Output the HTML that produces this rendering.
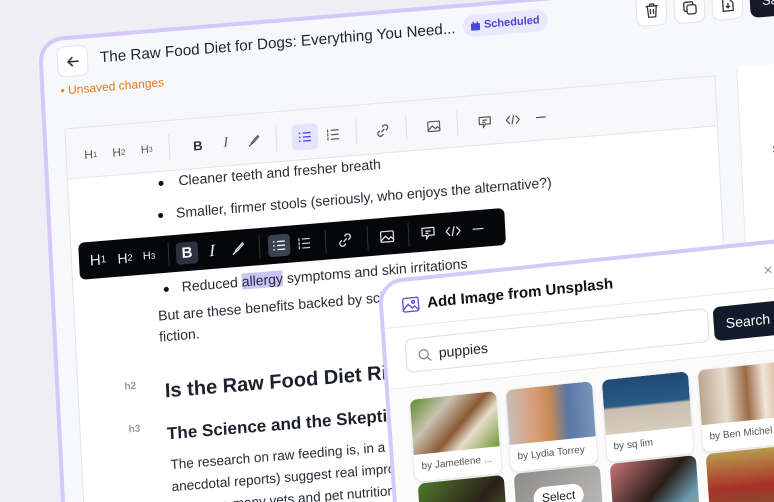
<!DOCTYPE html>
<html style="width:774px;height:502px;overflow:hidden"><head><meta charset="utf-8"><style>
*{box-sizing:border-box;margin:0;padding:0}
html,body{width:774px;height:502px;overflow:hidden}
body{background:#efeef4;font-family:"Liberation Sans",sans-serif;position:relative}
.w{position:absolute;transform-origin:0 0}
.abs{position:absolute}
.ic{position:absolute;transform:translate(-50%,-50%);display:flex;align-items:center;justify-content:center}
.t{position:absolute;white-space:nowrap;color:#262b36}
svg{display:block}
</style></head><body>

<div class="w" style="left:42px;top:42px;transform:matrix(1,-0.082,0.05,1,0,0)">
  <div class="abs" style="left:-4px;top:-4px;width:900px;height:700px;border:4px solid #d3c9fb;border-radius:24px;background:#f7f8fb"></div>
  <div class="abs" style="left:14px;top:6px;width:31px;height:31px;border:1px solid #e2e3ea;border-radius:8px;background:#fff;display:flex;align-items:center;justify-content:center">
    <svg width="16" height="16" viewBox="0 0 16 16" fill="none" stroke="#333" stroke-width="1.6" stroke-linecap="round"><path d="M13 8H3M7 4L3 8l4 4"/></svg>
  </div>
  <div class="t" style="left:57px;top:12px;font-size:15.2px;color:#1f2430">The Raw Food Diet for Dogs: Everything You Need...</div>
  <div class="abs" style="left:420px;top:8px;height:22px;padding:0 8px;border-radius:11px;background:#e9e8fd;color:#4b45d6;font-size:11px;font-weight:bold;display:flex;align-items:center;gap:4px">
    <svg width="9" height="9" viewBox="0 0 10 10"><rect x="0" y="2" width="10" height="8" rx="1" fill="#4b45d6"/><rect x="2" y="0" width="1.5" height="3" fill="#4b45d6"/><rect x="6.5" y="0" width="1.5" height="3" fill="#4b45d6"/></svg>Scheduled</div>
  <div class="t" style="left:16px;top:43px;font-size:12px;color:#e87a10">• Unsaved changes</div>
  <div class="abs" style="left:593px;top:3px;width:31px;height:31px;border:1px solid #e2e3ea;border-radius:8px;background:#fff;display:flex;align-items:center;justify-content:center"><svg width="14" height="15" viewBox="0 0 14 15" fill="none" stroke="#333" stroke-width="1.3"><path d="M1 3h12M5 3V1h4v2M2.5 3l1 11h7l1-11M5.5 6v5M8.5 6v5"/></svg></div>
  <div class="abs" style="left:631px;top:3px;width:31px;height:31px;border:1px solid #e2e3ea;border-radius:8px;background:#fff;display:flex;align-items:center;justify-content:center"><svg width="14" height="14" viewBox="0 0 14 14" fill="none" stroke="#333" stroke-width="1.3"><rect x="4" y="4" width="9" height="9" rx="2"/><path d="M10 4V2.5A1.5 1.5 0 008.5 1h-6A1.5 1.5 0 001 2.5v6A1.5 1.5 0 002.5 10H4"/></svg></div>
  <div class="abs" style="left:669px;top:3px;width:31px;height:31px;border:1px solid #e2e3ea;border-radius:8px;background:#fff;display:flex;align-items:center;justify-content:center"><svg width="12" height="14" viewBox="0 0 12 14" fill="none" stroke="#333" stroke-width="1.3"><path d="M1 1h6l4 4v8H1zM6 5v5M4 8l2 2 2-2"/></svg></div>
  <div class="abs" style="left:707px;top:3px;width:60px;height:31px;border-radius:8px;background:#141a28;color:#fff;font-size:13px;padding:7px 12px">Save</div>
  <div class="abs" style="left:690px;top:82px;width:120px;height:600px;background:#fff;border-left:1px solid #e6e7ec"></div>
  <div class="t" style="left:722px;top:162px;font-size:10px;color:#666">S</div>
  <div class="abs" style="left:18px;top:88px;width:651px;height:600px;border:1px solid #e3e4ea;background:#fff;overflow:hidden">
    <div class="t" style="left:110px;top:52px;font-size:14px">Cleaner teeth and fresher breath</div>
    <div class="abs" style="left:90px;top:59px;width:5px;height:5px;border-radius:50%;background:#111"></div>
    <div class="t" style="left:106px;top:84px;font-size:14px">Smaller, firmer stools (seriously, who enjoys the alternative?)</div>
    <div class="abs" style="left:88px;top:91px;width:5px;height:5px;border-radius:50%;background:#111"></div>
    <div class="t" style="left:108px;top:158px;font-size:14px">Reduced <span style="background:#cac3f6">allergy</span> symptoms and skin irritations</div>
    <div class="abs" style="left:90px;top:165px;width:5px;height:5px;border-radius:50%;background:#111"></div>
    <div class="t" style="left:83px;top:183px;font-size:14px;line-height:21px">But are these benefits backed by science, or is it fiction<br>fiction.</div>
    <div class="t" style="left:46px;top:256px;font-size:10px;color:#999;font-weight:bold">h2</div>
    <div class="t" style="left:86px;top:258px;font-size:20px;font-weight:bold;color:#1b202b">Is the Raw Food Diet Right for Your Dog?</div>
    <div class="t" style="left:48px;top:299px;font-size:10px;color:#999;font-weight:bold">h3</div>
    <div class="t" style="left:86px;top:302px;font-size:17px;font-weight:bold;color:#1b202b">The Science and the Skepticism</div>
    <div class="t" style="left:88px;top:332px;font-size:13.5px;line-height:22px">The research on raw feeding is, in a word, mixed. Some studies (and<br>anecdotal reports) suggest real improvements in coat and digestion.<br>However, many vets and pet nutritionists remain cautious.</div>
    <div class="abs" style="left:0;top:0;width:651px;height:50px;background:#f8f8fa;border-bottom:1px solid #e3e4ea;color:#555;font-size:12px">
      <span class="ic" style="left:24px;top:27px">H<small style="font-size:8px">1</small></span>
      <span class="ic" style="left:52px;top:27px">H<small style="font-size:8px">2</small></span>
      <span class="ic" style="left:80px;top:27px;font-size:11px">H<small style="font-size:7px">3</small></span>
      <span class="abs" style="left:102px;top:13px;width:1px;height:26px;background:#e0e0e6"></span>
      <span class="ic" style="left:131px;top:27px;font-weight:bold;font-size:13px;color:#333">B</span>
      <span class="ic" style="left:159px;top:27px;font-style:italic;font-family:'Liberation Serif',serif;font-size:14px">I</span>
      <span class="ic" style="left:187px;top:27px"><svg width="12" height="12" viewBox="0 0 12 12" fill="none" stroke="#555" stroke-width="1.2"><path d="M10 1l1 1-6 6-2 1 1-2zM3 9l-2 2"/></svg></span>
      <span class="abs" style="left:209px;top:13px;width:1px;height:26px;background:#e0e0e6"></span>
      <span class="abs" style="left:225px;top:14px;width:26px;height:26px;border-radius:5px;background:#e3e4fd"></span>
      <span class="ic" style="left:238px;top:27px"><svg width="12" height="10" viewBox="0 0 12 10" stroke="#4b45d6" stroke-width="1.3"><path d="M4 1h8M4 5h8M4 9h8M0 1h1.5M0 5h1.5M0 9h1.5"/></svg></span>
      <span class="ic" style="left:266px;top:27px"><svg width="12" height="11" viewBox="0 0 12 11" stroke="#555" stroke-width="1.2"><path d="M4 1h8M4 5.5h8M4 10h8M1 0v3M1 4v3M1 8v3"/></svg></span>
      <span class="abs" style="left:289px;top:13px;width:1px;height:26px;background:#e0e0e6"></span>
      <span class="ic" style="left:316px;top:27px"><svg width="13" height="13" viewBox="0 0 13 13" fill="none" stroke="#555" stroke-width="1.3"><path d="M5 8l3-3M6 3l1.5-1.5a2.5 2.5 0 013.5 3.5L9.5 6.5M7 10l-1.5 1.5A2.5 2.5 0 012 8l1.5-1.5"/></svg></span>
      <span class="abs" style="left:339px;top:13px;width:1px;height:26px;background:#e0e0e6"></span>
      <span class="ic" style="left:367px;top:27px"><svg width="13" height="11" viewBox="0 0 13 11" fill="none" stroke="#555" stroke-width="1.2"><rect x=".6" y=".6" width="11.8" height="9.8" rx="1"/><path d="M1 9l4-4 3 3 2-2 3 3"/></svg></span>
      <span class="abs" style="left:390px;top:13px;width:1px;height:26px;background:#e0e0e6"></span>
      <span class="ic" style="left:418px;top:27px"><svg width="13" height="12" viewBox="0 0 13 12" fill="none" stroke="#555" stroke-width="1.2"><path d="M1 1h11v7H7l-2 3V8H1zM4 4h5M4 6h3"/></svg></span>
      <span class="ic" style="left:446px;top:27px"><svg width="14" height="10" viewBox="0 0 14 10" fill="none" stroke="#555" stroke-width="1.2"><path d="M4 1L0.5 5 4 9M10 1l3.5 4L10 9M8 0.5L6 9.5"/></svg></span>
      <span class="ic" style="left:474px;top:27px"><svg width="10" height="2"><rect width="10" height="1.3" fill="#555"/></svg></span>
    </div>
  </div>
  <div class="abs" style="left:26px;top:203px;width:426px;height:37px;border-radius:6px;background:#06070a;color:#eee;font-size:15px">
    <span class="ic" style="left:19px;top:19px">H<small style="font-size:10px">1</small></span>
    <span class="ic" style="left:46px;top:19px;font-size:14px">H<small style="font-size:9px">2</small></span>
    <span class="ic" style="left:70px;top:19px;font-size:11px">H<small style="font-size:8px">3</small></span>
    <span class="abs" style="left:89px;top:7px;width:1px;height:24px;background:#333"></span>
    <span class="abs" style="left:97px;top:8px;width:22px;height:22px;border-radius:4px;background:#2b3240"></span>
    <span class="ic" style="left:108px;top:19px;font-weight:bold;font-size:15px;color:#fff">B</span>
    <span class="ic" style="left:133px;top:19px;font-style:italic;font-family:'Liberation Serif',serif;font-size:17px">I</span>
    <span class="ic" style="left:159px;top:19px"><svg width="13" height="13" viewBox="0 0 12 12" fill="none" stroke="#ddd" stroke-width="1.2"><path d="M10 1l1 1-6 6-2 1 1-2zM3 9l-2 2"/></svg></span>
    <span class="abs" style="left:180px;top:7px;width:1px;height:24px;background:#333"></span>
    <span class="abs" style="left:189px;top:8px;width:22px;height:22px;border-radius:4px;background:#3a4252"></span>
    <span class="ic" style="left:200px;top:19px"><svg width="12" height="10" viewBox="0 0 12 10" stroke="#fff" stroke-width="1.3"><path d="M4 1h8M4 5h8M4 9h8M0 1h1.5M0 5h1.5M0 9h1.5"/></svg></span>
    <span class="ic" style="left:225px;top:19px"><svg width="12" height="12" viewBox="0 0 12 11" stroke="#ddd" stroke-width="1.2"><path d="M4 1h8M4 5.5h8M4 10h8M1 0v3M1 4v3M1 8v3"/></svg></span>
    <span class="abs" style="left:246px;top:7px;width:1px;height:24px;background:#333"></span>
    <span class="ic" style="left:266px;top:19px"><svg width="14" height="14" viewBox="0 0 13 13" fill="none" stroke="#ddd" stroke-width="1.3"><path d="M5 8l3-3M6 3l1.5-1.5a2.5 2.5 0 013.5 3.5L9.5 6.5M7 10l-1.5 1.5A2.5 2.5 0 012 8l1.5-1.5"/></svg></span>
    <span class="abs" style="left:288px;top:7px;width:1px;height:24px;background:#333"></span>
    <span class="ic" style="left:308px;top:19px"><svg width="14" height="12" viewBox="0 0 13 11" fill="none" stroke="#ddd" stroke-width="1.2"><rect x=".6" y=".6" width="11.8" height="9.8" rx="1"/><path d="M1 9l4-4 3 3 2-2 3 3"/></svg></span>
    <span class="abs" style="left:329px;top:7px;width:1px;height:24px;background:#333"></span>
    <span class="ic" style="left:349px;top:19px"><svg width="14" height="13" viewBox="0 0 13 12" fill="none" stroke="#ddd" stroke-width="1.2"><path d="M1 1h11v7H7l-2 3V8H1zM4 4h5M4 6h3"/></svg></span>
    <span class="ic" style="left:374px;top:19px"><svg width="15" height="11" viewBox="0 0 14 10" fill="none" stroke="#ddd" stroke-width="1.2"><path d="M4 1L0.5 5 4 9M10 1l3.5 4L10 9M8 0.5L6 9.5"/></svg></span>
    <span class="ic" style="left:399px;top:19px"><svg width="11" height="2"><rect width="11" height="1.3" fill="#ddd"/></svg></span>
  </div>
</div>

<div class="w" style="left:382px;top:290px;transform:matrix(1,-0.103,0.07,1,0,0)">
  <div class="abs" style="left:-4px;top:-10px;width:520px;height:400px;border:4px solid #d3c9fb;border-radius:24px;background:#fff"></div>
  <svg class="abs" style="left:19px;top:10px" width="17" height="15" viewBox="0 0 17 15" fill="none" stroke="#5a52e0" stroke-width="1.4"><rect x=".7" y=".7" width="15.6" height="13.6" rx="2"/><path d="M1 12l5-5 4 4 2-2 4 4"/><circle cx="11" cy="5" r="1.3"/></svg>
  <div class="t" style="left:44px;top:9px;font-size:15px;font-weight:bold;color:#111">Add Image from Unsplash</div>
  <div class="t" style="left:380px;top:12px;font-size:16px;color:#999">×</div>
  <div class="abs" style="left:0;top:38px;width:520px;height:1px;background:#e6e6ec"></div>
  <div class="abs" style="left:19px;top:51px;width:303px;height:34px;border:1px solid #dcdde3;border-radius:7px;background:#fff">
    <svg class="abs" style="left:11px;top:10px" width="14" height="14" viewBox="0 0 14 14" fill="none" stroke="#888" stroke-width="1.3"><circle cx="6" cy="6" r="4.5"/><path d="M9.5 9.5L13 13"/></svg>
    <div class="t" style="left:32px;top:8px;font-size:14px;color:#222">puppies</div>
  </div>
  <div class="abs" style="left:327px;top:51px;width:70px;height:34px;border-radius:7px;background:#131a2b;color:#fff;font-size:14px;padding:9px 12px">Search</div>
  <div class="abs" style="left:0;top:99px;width:520px;height:1px;background:#e6e6ec"></div>
  <div class="abs" style="left:0;top:100px;width:520px;height:290px;background:#fbfbfc"></div>
  <div class="abs" style="left:20px;top:112px;width:86px;height:82px;border-radius:7px;background:#fff;box-shadow:0 1px 3px rgba(0,0,0,.15);overflow:hidden">
    <div style="height:55px;background:linear-gradient(135deg,#5d8a2e 0%,#c9c2b0 30%,#8a5a33 55%,#e8dccb 70%,#6f9a35 100%)"></div>
    <div style="font-size:10px;color:#555;padding:7px 7px;white-space:nowrap">by Jametlene ...</div></div>
  <div class="abs" style="left:116px;top:112px;width:86px;height:82px;border-radius:7px;background:#fff;box-shadow:0 1px 3px rgba(0,0,0,.15);overflow:hidden">
    <div style="height:55px;background:linear-gradient(90deg,#c7bfb8 0%,#d89f7a 30%,#c58a55 50%,#5877a5 70%,#7b93b8 100%)"></div>
    <div style="font-size:10px;color:#555;padding:7px 7px;white-space:nowrap">by Lydia Torrey</div></div>
  <div class="abs" style="left:212px;top:112px;width:86px;height:82px;border-radius:7px;background:#fff;box-shadow:0 1px 3px rgba(0,0,0,.15);overflow:hidden">
    <div style="height:55px;background:linear-gradient(180deg,#1d4b74 0%,#2a5a85 50%,#c9bfb0 55%,#d6ccbe 100%)"></div>
    <div style="font-size:10px;color:#555;padding:7px 7px;white-space:nowrap">by sq lim</div></div>
  <div class="abs" style="left:308px;top:112px;width:86px;height:82px;border-radius:7px;background:#fff;box-shadow:0 1px 3px rgba(0,0,0,.15);overflow:hidden">
    <div style="height:55px;background:linear-gradient(90deg,#bba58d 0%,#e9ddd0 30%,#9b6a44 55%,#f0e6da 75%,#c9a482 100%)"></div>
    <div style="font-size:10px;color:#555;padding:7px 7px;white-space:nowrap">by Ben Michel</div></div>
  <div class="abs" style="left:22px;top:196px;width:86px;height:82px;border-radius:7px;overflow:hidden;background:linear-gradient(135deg,#4f7c2a,#2b2018 50%,#6b8f3a)"></div>
  <div class="abs" style="left:118px;top:196px;width:86px;height:82px;border-radius:7px;overflow:hidden;background:linear-gradient(135deg,#8e8c88,#c8c6c2)">
    <div class="abs" style="left:18px;top:16px;width:50px;height:22px;border-radius:11px;background:#fff;font-size:12px;color:#222;text-align:center;line-height:22px">Select</div></div>
  <div class="abs" style="left:214px;top:196px;width:86px;height:82px;border-radius:7px;overflow:hidden;background:linear-gradient(135deg,#c9747a,#2a1d16 45%,#6a9ab3 70%,#d3a35a)"></div>
  <div class="abs" style="left:310px;top:196px;width:86px;height:82px;border-radius:7px;overflow:hidden;background:linear-gradient(180deg,#b79a4d,#a83028 45%,#5b7a30)"></div>
</div>

</body></html>
